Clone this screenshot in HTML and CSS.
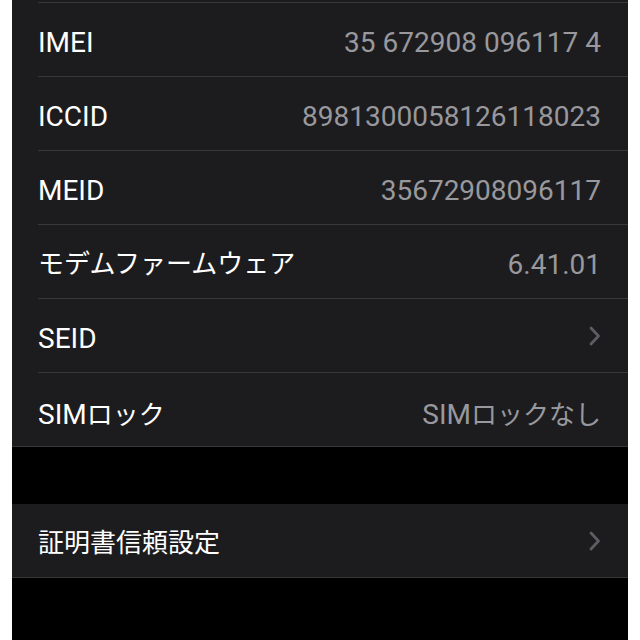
FILE: index.html
```html
<!DOCTYPE html>
<html lang="ja">
<head>
    <meta charset="UTF-8">
    <title>情報</title>
    <link rel="stylesheet" href="styles.css">
</head>
<body>

<div class="panel">
    <!-- 上のグループ -->
    <div class="group">
        <div class="top-spacer"></div>
        <div class="row">
            <span class="label">IMEI</span>
            <span class="value">35 672908 096117 4</span>
        </div>
        <div class="row">
            <span class="label">ICCID</span>
            <span class="value">8981300058126118023</span>
        </div>
        <div class="row">
            <span class="label">MEID</span>
            <span class="value">35672908096117</span>
        </div>
        <div class="row">
            <span class="label ja">モデムファームウェア</span>
            <span class="value">6.41.01</span>
        </div>
        <div class="row">
            <span class="label">SEID</span>
            <svg class="chevron" viewBox="0 0 13 22" width="13" height="22">
                <path d="M3 3 L10.5 11 L3 19" fill="none" stroke="#5e5e62" stroke-width="2.8" stroke-linecap="round" stroke-linejoin="round"/>
            </svg>
        </div>
        <div class="row">
            <span class="label">SIM<span class="ja">ロック</span></span>
            <span class="value">SIM<span class="ja">ロックなし</span></span>
        </div>
    </div>

    <!-- 証明書 -->
    <div class="group second">
        <div class="row first">
            <span class="label ja">証明書信頼設定</span>
            <svg class="chevron" viewBox="0 0 13 22" width="13" height="22">
                <path d="M3 3 L10.5 11 L3 19" fill="none" stroke="#5e5e62" stroke-width="2.8" stroke-linecap="round" stroke-linejoin="round"/>
            </svg>
        </div>
    </div>
</div>

</body>
</html>
```

FILE: styles.css
```css
/* Fond blanc autour du panneau */
body {
    margin: 0;
    background-color: #ffffff;
    font-family: Roboto, "Noto Sans CJK JP", sans-serif;
}

.panel {
    margin: 0 12px;
    height: 640px;
    background-color: #000000;
    overflow: hidden;
}

.group {
    background-color: #1c1c1e;
    border-bottom: 1px solid #38383a;
}

.group.second {
    margin-top: 57px;
}

.top-spacer {
    height: 2px;
}

/* Une ligne de réglage */
.row {
    display: flex;
    align-items: center;
    justify-content: space-between;
    height: 73px;
    margin-left: 26px;
    padding-right: 27px;
    border-top: 1px solid #38383a;
}

.row.first {
    border-top: none;
}

.label {
    color: #ffffff;
    font-size: 28px;
    margin-top: 5px;
}

.value {
    color: #98989d;
    font-size: 28px;
    margin-top: 5px;
}

.ja {
    font-family: "Noto Sans CJK JP", sans-serif;
    font-size: 26px;
}

.label.ja {
    margin-top: 0;
}

.chevron {
    display: block;
}
```
